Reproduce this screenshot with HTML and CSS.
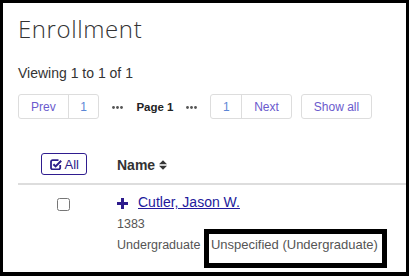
FILE: index.html
```html
<!DOCTYPE html>
<html>
<head>
<meta charset="utf-8">
<title>Enrollment</title>
<link rel="stylesheet" href="styles.css">
</head>
<body>
<div class="frame">
  <div class="page">
    <h1 class="title">Enrollment</h1>
    <div class="viewing">Viewing 1 to 1 of 1</div>
    <div class="pager">
      <div class="pgroup">
        <a class="pbtn purple" href="#">Prev</a>
        <a class="pbtn blue num" href="#">1</a>
      </div>
      <svg class="dots" width="11" height="3" viewBox="0 0 11 3"><circle cx="1.5" cy="1.5" r="1.4"/><circle cx="5.5" cy="1.5" r="1.4"/><circle cx="9.5" cy="1.5" r="1.4"/></svg>
      <span class="current">Page 1</span>
      <svg class="dots" width="11" height="3" viewBox="0 0 11 3"><circle cx="1.5" cy="1.5" r="1.4"/><circle cx="5.5" cy="1.5" r="1.4"/><circle cx="9.5" cy="1.5" r="1.4"/></svg>
      <div class="pright">
        <div class="pgroup">
          <a class="pbtn blue num" href="#">1</a>
          <a class="pbtn purple" href="#">Next</a>
        </div>
        <a class="pbtn single purple" href="#">Show all</a>
      </div>
    </div>
    <div class="table">
      <div class="thead">
        <div class="c1">
          <button class="allbtn" type="button"><svg class="chk" width="12" height="11" viewBox="0 0 12 11"><path d="M8.5 1.2H2.6A1.6 1.6 0 0 0 1 2.8v6A1.6 1.6 0 0 0 2.6 10.4h6A1.6 1.6 0 0 0 10.2 8.8V6" fill="none" stroke="currentColor" stroke-width="1.8"/><path d="M3.4 5.2l2.2 2.2 5.6-5.6" fill="none" stroke="currentColor" stroke-width="2"/></svg>All</button>
        </div>
        <div class="c2 namehead">Name<svg class="sort" width="10" height="10" viewBox="0 0 10 10"><path d="M1 4.3L5 0.3 9 4.3z M1 5.7h8L5 9.7z"/></svg></div>
      </div>
      <div class="trow">
        <div class="c1"><input class="cb" type="checkbox"></div>
        <div class="c2">
          <div class="nameline"><svg class="plus" width="11" height="11" viewBox="0 0 11 11"><path d="M5.5 0v11M0 5.5h11" stroke="currentColor" stroke-width="3"/></svg><a class="plink" href="#">Cutler, Jason W.</a></div>
          <div class="meta">1383</div>
          <div class="meta">Undergraduate <span class="mark">Unspecified (Undergraduate)</span></div>
        </div>
      </div>
    </div>
  </div>
</div>
</body>
</html>
```
FILE: styles.css
```css
html, body {
  margin: 0;
  padding: 0;
  background: #000;
}
.frame {
  width: 409px;
  height: 276px;
  box-sizing: border-box;
  border: 3px solid #000;
  border-bottom-width: 4px;
  background: #fff;
  overflow: hidden;
  font-family: "Liberation Sans", Arial, sans-serif;
  color: #333;
}
.page {
  padding: 11px 0 0 15px;
}
.title {
  margin: 0;
  font-family: "Open Sans", Lato, "Liberation Sans", sans-serif;
  font-weight: 300;
  font-size: 24px;
  line-height: 30px;
  letter-spacing: 0.6px;
  color: #333;
}
.viewing {
  margin-top: 19px;
  font-size: 14px;
  line-height: 20px;
}
.pager {
  margin-top: 11px;
  display: flex;
  align-items: center;
  gap: 13px;
  font-size: 12px;
}
.pgroup {
  display: flex;
  border: 1px solid #ddd;
  border-radius: 3px;
  height: 25px;
  box-sizing: border-box;
}
.pbtn {
  display: flex;
  align-items: center;
  padding: 0 12px;
  text-decoration: none;
}
.pbtn.num {
  padding: 0 11.5px;
}
.pgroup .pbtn + .pbtn {
  border-left: 1px solid #ddd;
}
.pbtn.single {
  border: 1px solid #ddd;
  border-radius: 3px;
  height: 25px;
  box-sizing: border-box;
}
.purple { color: #6a5acd; }
.blue { color: #5b86d6; }
.dots {
  fill: #555;
  margin-top: 2px;
}
.current {
  font-weight: bold;
  font-size: 11.5px;
  color: #222;
}
.pright {
  display: flex;
  gap: 9px;
}
.table {
  margin-top: 24px;
}
.thead, .trow {
  display: flex;
}
.thead {
  padding: 10px 0 8px;
  border-bottom: 2px solid #ddd;
  align-items: center;
}
.trow {
  padding-top: 7px;
  align-items: flex-start;
}
.c1 {
  width: 91px;
  flex: none;
  display: flex;
  justify-content: center;
}
.c2 {
  padding-left: 8px;
}
.allbtn {
  display: flex;
  align-items: center;
  height: 22px;
  width: 46px;
  box-sizing: border-box;
  padding: 0 0 0 8px;
  border: 1px solid #2f1d8f;
  border-radius: 3px;
  background: #fff;
  color: #2c1e8a;
  font-family: "Liberation Sans", Arial, sans-serif;
  font-size: 13px;
}
.chk {
  margin-right: 3px;
}
.namehead {
  font-size: 14px;
  font-weight: bold;
  line-height: 20px;
  padding-top: 2px;
  display: flex;
  align-items: center;
  color: #333;
}
.sort {
  fill: #333;
  margin-left: 3px;
}
.cb {
  margin: 6px 0 0;
  width: 13px;
  height: 13px;
}
.nameline {
  font-size: 14px;
  line-height: 20px;
}
.plus {
  color: #2d1b8c;
  vertical-align: -2px;
  margin-right: 10px;
}
.plink {
  color: #22199c;
}
.meta {
  margin-top: 3px;
  font-size: 12.5px;
  line-height: 18px;
  color: #555;
}
.mark {
  font-size: 13px;
  border: 5px solid #000;
  padding: 3px 4px 11px 2px;
}
```
